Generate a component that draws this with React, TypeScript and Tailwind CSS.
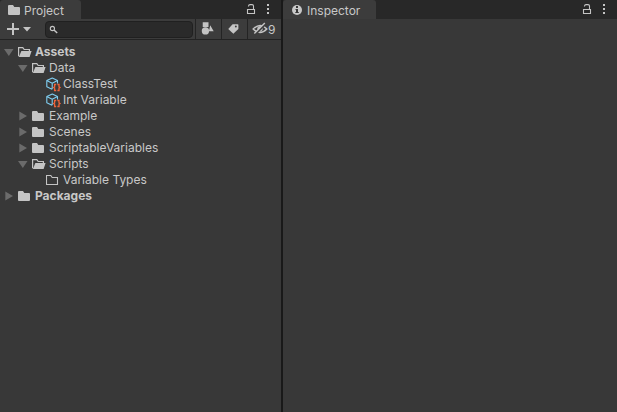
import React from "react";

type Kind = "open" | "closed" | "empty" | "asset";
type Row = { label: string; depth: number; kind: Kind; arrow?: "down" | "right"; bold?: boolean };

const rows: Row[] = [
  { label: "Assets", depth: 0, kind: "open", arrow: "down", bold: true },
  { label: "Data", depth: 1, kind: "open", arrow: "down" },
  { label: "ClassTest", depth: 2, kind: "asset" },
  { label: "Int Variable", depth: 2, kind: "asset" },
  { label: "Example", depth: 1, kind: "closed", arrow: "right" },
  { label: "Scenes", depth: 1, kind: "closed", arrow: "right" },
  { label: "ScriptableVariables", depth: 1, kind: "closed", arrow: "right" },
  { label: "Scripts", depth: 1, kind: "open", arrow: "down" },
  { label: "Variable Types", depth: 2, kind: "empty" },
  { label: "Packages", depth: 0, kind: "closed", arrow: "right", bold: true },
];

const indents = ["pl-1", "pl-[18px]", "pl-8"];

function Arrow({ dir }: { dir?: "down" | "right" }) {
  return (
    <svg width="10" height="16" viewBox="0 0 10 16" fill="#6b6b6b" className="shrink-0">
      {dir === "down" && <path d="M0 5h9.5L4.8 12z" />}
      {dir === "right" && <path d="M1.3 3.6v9L9 8.1z" />}
    </svg>
  );
}

function NodeIcon({ kind }: { kind: Kind }) {
  if (kind === "asset")
    return (
      <svg width="16" height="16" viewBox="0 0 16 16" fill="none" className="-mr-0.5 shrink-0">
        <path d="M6 13.2 .8 10.8V4.6L6.3 2l5.2 2.6v3M.8 4.6l5.4 2.6 5.3-2.6M6.2 7.2v6" stroke="#7fcdf0" strokeWidth="1.1" strokeLinejoin="round" />
        <path d="M10.2 8.5H8.6v2.3l-1 .7 1 .7v2.3h1.6M11.4 8.5H13v2.3l1 .7-1 .7v2.3h-1.6" stroke="#f0643a" strokeWidth="1.3" />
      </svg>
    );
  return (
    <svg width="14" height="16" viewBox="0 0 14 16" className="shrink-0">
      {kind === "closed" && <path d="M0 4q0-1 1-1h4l1.3 2H11q1 0 1 1v6q0 1-1 1H1q-1 0-1-1z" fill="#c4c4c4" />}
      {kind === "empty" && <path d="M.5 3.5h4.3l1.4 2h5.3v7H.5z" fill="none" stroke="#c4c4c4" strokeWidth="1.1" />}
      {kind === "open" && (
        <>
          <path d="M.6 12.2V3.6h4.2l1.4 1.9h5.2v2" fill="none" stroke="#c4c4c4" strokeWidth="1.2" />
          <path d="M3.4 7h10.2l-2 6H.8z" fill="#c4c4c4" />
        </>
      )}
    </svg>
  );
}

function WindowControls() {
  return (
    <div className="ml-auto flex pr-2.5">
      <svg width="28" height="19" viewBox="0 0 28 19" fill="none">
        <path d="M4.5 9.5h7v4h-7z" stroke="#c4c4c4" strokeWidth="1.1" />
        <path d="M5.5 6.5v-.4Q5.7 4.6 7 4.6h2q1.5 0 1.5 1.5v3.2" stroke="#c4c4c4" strokeWidth="1.1" />
        <path d="M24 4h2v2h-2zM24 8h2v2h-2zM24 12h2v2h-2z" fill="#c4c4c4" />
      </svg>
    </div>
  );
}

export default function App() {
  return (
    <main className="flex h-[412px] w-[617px] overflow-hidden bg-[#191919] font-['Inter','Liberation_Sans',sans-serif] text-[12px] leading-4 whitespace-nowrap text-[#c8c8c8]">
      <section className="flex w-[281px] flex-col bg-[#383838]">
        <header className="flex h-[19px] shrink-0 bg-[#282828]">
          <div className="flex w-[81px] items-center rounded-t-[3px] bg-[#3c3c3c] pl-2">
            <svg width="16" height="19" viewBox="0 0 16 19" fill="#c4c4c4">
              <path d="M0 6q0-1 1-1h4l1.3 2H11q1 0 1 1v6q0 1-1 1H1q-1 0-1-1z" />
            </svg>
            <span className="pt-[3px]">Project</span>
          </div>
          <WindowControls />
        </header>
        <div className="flex h-[21px] shrink-0 items-center border-b border-[#232323] bg-[#3c3c3c]">
          <svg width="45" height="20" viewBox="0 0 45 20" fill="#c4c4c4" className="shrink-0">
            <path d="M12 4h2v5h5v2h-5v5h-2v-5H7V9h5zM23 8h8l-4 4.5z" />
          </svg>
          <div className="flex h-[17px] w-[148px] shrink-0 items-center rounded-[4px] border border-[#202020] bg-[#2a2a2a]">
            <svg width="16" height="15" viewBox="0 0 16 15" fill="none" stroke="#c4c4c4">
              <circle cx="6.4" cy="6.5" r="2.1" strokeWidth="1.1" />
              <path d="m8 8 3.2 3" strokeWidth="1.5" />
            </svg>
          </div>
          <div className="ml-0.5 flex h-full flex-1 border-l border-[#242424]">
            <svg width="26" height="20" viewBox="0 0 26 20" fill="#c4c4c4" className="border-r border-[#242424]">
              <path d="M7 3h6v5H7zM14.8 6l3.6 6.3h-5z" />
              <circle cx="9.8" cy="12" r="3.8" />
            </svg>
            <svg width="26" height="20" viewBox="0 0 26 20" className="border-r border-[#242424]">
              <path d="M11 5h5.4q.6 0 .6.6V10l-5.2 5L6.5 10z" fill="#c4c4c4" />
              <circle cx="14.4" cy="7.4" r="1" fill="#3c3c3c" />
            </svg>
            <svg width="20" height="20" viewBox="0 0 20 20" fill="none" stroke="#c4c4c4">
              <path d="M5.2 10q7-7.2 13.6 0-6.8 7-13.6 0z" strokeWidth="1.5" />
              <path d="M9.5 8.8q2.2-3 4.8 0 .8 3-2 3.8-2.8-.1-2.8-3.8z" fill="#c4c4c4" strokeWidth=".5" />
              <path d="m7 15.5 11-11" stroke="#3c3c3c" strokeWidth="2" />
              <path d="M6.3 14.5 16.8 4" strokeWidth="1.4" />
            </svg>
            <span className="pt-[3px]">9</span>
          </div>
        </div>
        <div className="flex flex-col pt-1">
          {rows.map((r) => (
            <div key={r.label} className={`flex h-4 items-center ${indents[r.depth]}`}>
              <Arrow dir={r.arrow} />
              <div className="ml-1 flex gap-[3px]">
                <NodeIcon kind={r.kind} />
                <span className={r.bold ? "font-bold" : "font-normal"}>{r.label}</span>
              </div>
            </div>
          ))}
        </div>
      </section>
      <section className="ml-0.5 flex flex-1 flex-col bg-[#383838]">
        <header className="flex h-[19px] shrink-0 bg-[#282828]">
          <div className="flex w-[93px] items-center rounded-t-[3px] bg-[#3c3c3c] pl-[9px]">
            <svg width="15" height="19" viewBox="0 0 15 19">
              <circle cx="5" cy="10" r="5" fill="#c8c8c8" />
              <path d="M4 6h2v2H4zM3.5 9H6v3h.8v1H3.3v-1H4v-2h-.5z" fill="#383838" />
            </svg>
            <span className="pt-[3px]">Inspector</span>
          </div>
          <WindowControls />
        </header>
      </section>
    </main>
  );
}
